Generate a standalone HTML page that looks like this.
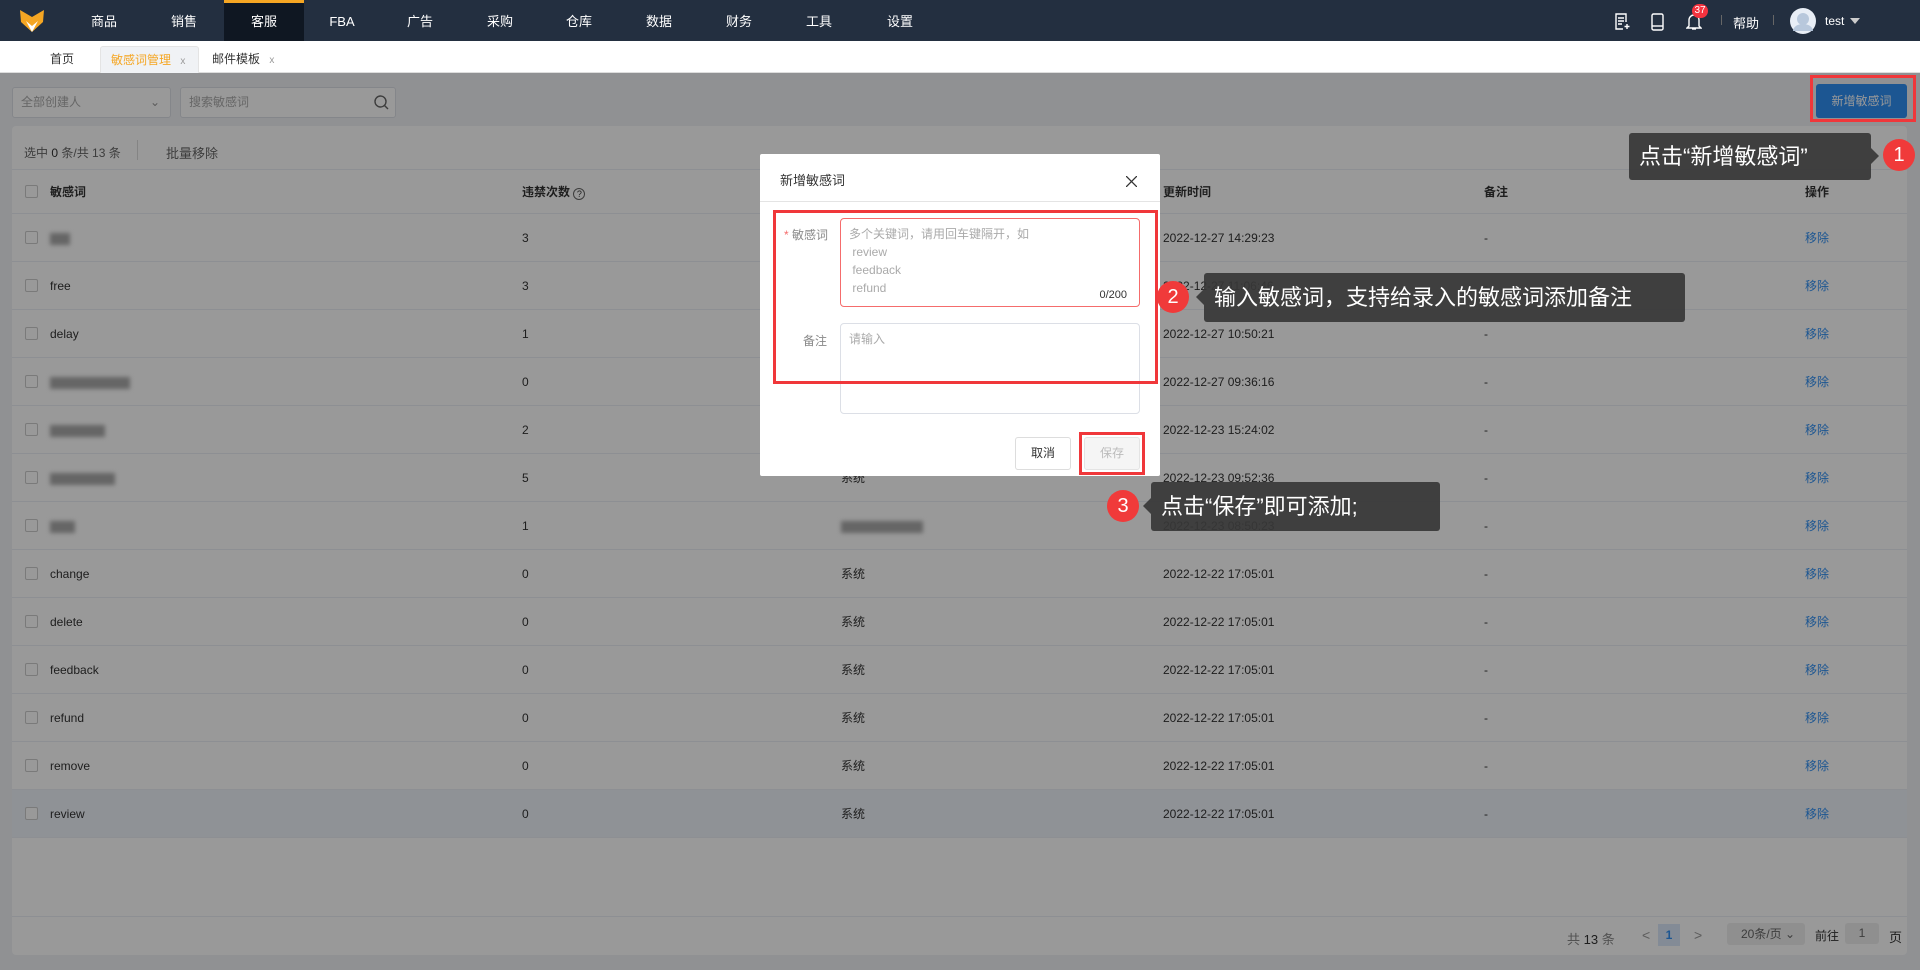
<!DOCTYPE html>
<html><head><meta charset="utf-8">
<style>
*{box-sizing:border-box;margin:0;padding:0}
body{width:1920px;height:970px;overflow:hidden;position:relative;font-family:"Liberation Sans","Noto Sans CJK SC",sans-serif;font-size:12px;color:#333;background:#f0f2f5}
.nav{position:absolute;left:0;top:0;width:1920px;height:41px;background:#232f40;color:#fff;font-size:13px}
.nav .m{position:absolute;top:0;height:41px;line-height:43px;width:80px;text-align:center}
.nav .act{background:#0f1722;border-top:3px solid #f5a623;line-height:37px}
.tabs{position:absolute;left:0;top:41px;width:1920px;height:32px;background:#fff;border-bottom:1px solid #ddd}
.tab{position:absolute;top:5px;height:27px;line-height:26px;font-size:12px}
.main{position:absolute;left:0;top:73px;width:1920px;height:897px}
.inp{position:absolute;top:14px;height:31px;border:1px solid #dcdfe6;border-radius:3px;background:#fff;color:#aaa;line-height:29px;padding-left:8px;font-size:12px}
.card{position:absolute;left:12px;top:53px;width:1895px;height:829px;background:#fff;border-radius:4px}
.row{position:absolute;left:0;width:1895px;height:48px;border-bottom:1px solid #ebeef5;line-height:48px}
.row span{position:absolute;top:0}
.cb{position:absolute;left:13px;top:17px;width:13px;height:13px;border:1px solid #ccc;border-radius:2px;background:#fff}
.blur{display:inline-block;height:12px;background:#aaa;filter:blur(2px);vertical-align:middle}
.ov{position:absolute;left:0;top:73px;width:1920px;height:897px;background:rgba(0,0,0,.4)}
.modal{position:absolute;left:760px;top:154px;width:400px;height:322px;background:#fff;border-radius:2px}
.ta{position:absolute;border:1px solid #dcdfe6;border-radius:4px;background:#fff;color:#aaa;font-size:12px;padding:6px 8px;line-height:18px}
.rb{position:absolute;border:3px solid #f0373a}
.tip{position:absolute;background:rgba(55,55,55,.92);color:#fff;font-size:22px;border-radius:3px;padding-left:10px}
.num{position:absolute;width:32px;height:32px;border-radius:50%;background:#f03a3a;color:#fff;font-size:20px;text-align:center;line-height:32px}
</style></head><body>
<div class="nav">
<svg style="position:absolute;left:19px;top:9px" width="26" height="24" viewBox="0 0 26 24"><path d="M1 1 L13 8 L25 1 L24 13 L13 23 L2 13Z" fill="#f5a623"/><path d="M7 12 L13 17 L19 12 L13 23Z" fill="#fff"/></svg>
<div class="m" style="left:64px">商品</div><div class="m" style="left:144px">销售</div><div class="m act" style="left:224px">客服</div><div class="m" style="left:302px">FBA</div><div class="m" style="left:380px">广告</div><div class="m" style="left:460px">采购</div><div class="m" style="left:539px">仓库</div><div class="m" style="left:619px">数据</div><div class="m" style="left:699px">财务</div><div class="m" style="left:779px">工具</div><div class="m" style="left:860px">设置</div>
<svg style="position:absolute;left:1614px;top:13px" width="16" height="17" viewBox="0 0 16 17" fill="none" stroke="#fff" stroke-width="1.4"><path d="M12 9V1H2v15h7"/><path d="M4 5h6M4 8h6M4 11h4M13 11v5M10.5 13.5h5"/></svg>
<svg style="position:absolute;left:1651px;top:13px" width="13" height="18" viewBox="0 0 13 18" fill="none" stroke="#fff" stroke-width="1.4"><rect x="1" y="1" width="11" height="16" rx="1.5"/><path d="M1 13h11"/></svg>
<svg style="position:absolute;left:1686px;top:12px" width="16" height="19" viewBox="0 0 16 19" fill="none" stroke="#fff" stroke-width="1.4"><path d="M3 14V8a5 5 0 0 1 10 0v6l2 2H1z"/><path d="M6 17h4"/></svg>
<div style="position:absolute;left:1692px;top:4px;width:16px;height:14px;border-radius:7px;background:#f5333f;font-size:10px;text-align:center;line-height:14px">37</div>
<div style="position:absolute;left:1721px;top:15px;width:1px;height:10px;background:#666"></div>
<div style="position:absolute;left:1733px;top:13px;font-size:13px">帮助</div>
<div style="position:absolute;left:1773px;top:15px;width:1px;height:10px;background:#666"></div>
<svg style="position:absolute;left:1790px;top:8px" width="26" height="26" viewBox="0 0 26 26"><circle cx="13" cy="13" r="13" fill="#e8eef6"/><circle cx="13" cy="11" r="6" fill="#b8c8dc"/><path d="M3 23a10 7 0 0 1 20 0" fill="#b8c8dc"/></svg>
<div style="position:absolute;left:1825px;top:14px;font-size:12px">test</div>
<div style="position:absolute;left:1850px;top:18px;border:5px solid transparent;border-top:6px solid #ccc"></div>
</div>
<div class="tabs">
<div class="tab" style="left:50px">首页</div>
<div class="tab" style="left:100px;width:99px;background:#f0f2f5;border:1px solid #e4e4e4;border-bottom:none;border-radius:3px 3px 0 0;color:#f5a623;padding-left:10px">敏感词管理 <span style="color:#999;font-size:10px;margin-left:6px">x</span></div>
<div class="tab" style="left:212px">邮件模板 <span style="color:#999;font-size:10px;margin-left:6px">x</span></div>
</div>
<div class="main">
<div class="inp" style="left:12px;width:159px">全部创建人<span style="position:absolute;right:10px;color:#999">⌄</span></div>
<div class="inp" style="left:180px;width:216px">搜索敏感词<svg style="position:absolute;right:6px;top:7px" width="15" height="15" viewBox="0 0 15 15" fill="none" stroke="#666" stroke-width="1.4"><circle cx="6.5" cy="6.5" r="5.5"/><path d="M10.5 10.5l3.5 3.5"/></svg></div>
<div style="position:absolute;left:1816px;top:11px;width:91px;height:34px;background:#2f8ff3;border-radius:3px;color:#fff;text-align:center;line-height:34px;font-size:12px">新增敏感词</div>
<div class="card">
<div style="position:absolute;left:12px;top:18px;color:#666">选中 <b style="font-weight:normal;color:#333">0</b> 条/共 13 条</div>
<div style="position:absolute;left:125px;top:14px;width:1px;height:20px;background:#ddd"></div>
<div style="position:absolute;left:154px;top:17px;color:#666;font-size:13px">批量移除</div>
<div style="position:absolute;left:0;top:43px;width:1895px;height:1px;background:#ebeef5"></div>
<div class="row" style="top:44px;height:44px;line-height:44px;font-weight:bold;color:#333"><div class="cb" style="top:15px"></div><span style="left:38px">敏感词</span><span style="left:510px">违禁次数 <span style="position:relative;display:inline-block;width:12px;height:12px;border:1px solid #666;border-radius:50%;font-size:9px;line-height:10px;text-align:center;font-weight:normal;vertical-align:-1px">?</span></span><span style="left:829px">创建人</span><span style="left:1151px">更新时间</span><span style="left:1472px">备注</span><span style="left:1793px">操作</span></div>
<div id="rows"></div>
<div style="position:absolute;left:0;top:790px;width:1895px;height:1px;background:#ebeef5"></div>
<div style="position:absolute;left:1555px;top:803px;color:#888;font-size:13px">共 <span style="color:#333">13</span> 条</div>
<div style="position:absolute;left:1630px;top:801px;color:#999;font-size:14px">&lt;</div>
<div style="position:absolute;left:1646px;top:798px;width:22px;height:22px;background:#dbe8fa;color:#2f8ff3;text-align:center;line-height:22px;font-weight:bold">1</div>
<div style="position:absolute;left:1682px;top:801px;color:#999;font-size:14px">&gt;</div>
<div style="position:absolute;left:1715px;top:797px;width:78px;height:22px;background:#eee;border-radius:3px;color:#666;line-height:22px;padding-left:14px">20条/页 ⌄</div>
<div style="position:absolute;left:1803px;top:801px">前往</div>
<div style="position:absolute;left:1833px;top:797px;width:34px;height:21px;background:#eee;border-radius:3px;text-align:center;line-height:21px;color:#666">1</div>
<div style="position:absolute;left:1877px;top:801px;font-size:13px">页</div>
</div>
</div>
<div class="ov"></div>
<div class="modal">
<div style="position:absolute;left:20px;top:16px;font-size:13px;color:#333">新增敏感词</div>
<svg style="position:absolute;left:366px;top:22px" width="11" height="11" viewBox="0 0 11 11" stroke="#333" stroke-width="1.3"><path d="M0 0L11 11M11 0L0 11"/></svg>
<div style="position:absolute;left:0;top:47px;width:400px;height:1px;background:#e4e4e4"></div>
<div style="position:absolute;left:24px;top:72px;color:#888;font-size:12px"><span style="color:#f56c6c">*</span> 敏感词</div>
<div class="ta" style="left:80px;top:64px;width:300px;height:89px;border-color:#f56c6c">多个关键词，请用回车键隔开，如<br>&nbsp;review<br>&nbsp;feedback<br>&nbsp;refund<span style="position:absolute;right:12px;bottom:2px;color:#333;font-size:11px">0/200</span></div>
<div style="position:absolute;left:43px;top:178px;color:#888">备注</div>
<div class="ta" style="left:80px;top:169px;width:300px;height:91px">请输入</div>
<div style="position:absolute;left:255px;top:283px;width:56px;height:33px;border:1px solid #ddd;border-radius:3px;text-align:center;line-height:31px">取消</div>
<div style="position:absolute;left:324px;top:283px;width:56px;height:33px;border:1px solid #e4e4e4;background:#f5f5f5;border-radius:3px;text-align:center;line-height:31px;color:#bbb">保存</div>
</div>
<div class="rb" style="left:773px;top:210px;width:385px;height:174px"></div>
<div class="rb" style="left:1079px;top:432px;width:66px;height:43px"></div>
<div class="rb" style="left:1810px;top:75px;width:106px;height:47px"></div>
<div class="tip" style="left:1629px;top:133px;width:242px;height:47px;line-height:47px">点击“新增敏感词”</div>
<div style="position:absolute;left:1871px;top:148px;border:8px solid transparent;border-left:8px solid rgba(55,55,55,.92)"></div>
<div class="num" style="left:1883px;top:139px">1</div>
<div class="tip" style="left:1204px;top:273px;width:481px;height:49px;line-height:49px">输入敏感词，支持给录入的敏感词添加备注</div>
<div style="position:absolute;left:1188px;top:289px;border:8px solid transparent;border-right:8px solid rgba(55,55,55,.92)"></div>
<div class="num" style="left:1157px;top:281px">2</div>
<div class="tip" style="left:1151px;top:482px;width:289px;height:49px;line-height:49px">点击“保存”即可添加;</div>
<div style="position:absolute;left:1135px;top:498px;border:8px solid transparent;border-right:8px solid rgba(55,55,55,.92)"></div>
<div class="num" style="left:1107px;top:490px">3</div>
<script>
var d=[["b20","3","","2022-12-27 14:29:23"],["free","3","","2022-12-27 11:06:46"],["delay","1","","2022-12-27 10:50:21"],["b80","0","","2022-12-27 09:36:16"],["b55","2","","2022-12-23 15:24:02"],["b65","5","系统","2022-12-23 09:52:36"],["b25","1","B","2022-12-23 08:50:23"],["change","0","系统","2022-12-22 17:05:01"],["delete","0","系统","2022-12-22 17:05:01"],["feedback","0","系统","2022-12-22 17:05:01"],["refund","0","系统","2022-12-22 17:05:01"],["remove","0","系统","2022-12-22 17:05:01"],["review","0","系统","2022-12-22 17:05:01"]];
var h="";d.forEach(function(r,i){var w=/^b\d+$/.test(r[0])?'<i class="blur" style="width:'+r[0].slice(1)+'px"></i>':r[0];var c=r[2]=="B"?'<i class="blur" style="width:82px"></i>':r[2];
h+='<div class="row" style="top:'+(88+i*48)+'px;'+(i==12?'background:#eef3fb;':'')+'"><div class="cb"></div><span style="left:38px">'+w+'</span><span style="left:510px">'+r[1]+'</span><span style="left:829px">'+c+'</span><span style="left:1151px">'+r[3]+'</span><span style="left:1472px">-</span><span style="left:1793px;color:#2f8ff3">移除</span></div>';});
document.getElementById("rows").innerHTML=h;
</script>
</body></html>
